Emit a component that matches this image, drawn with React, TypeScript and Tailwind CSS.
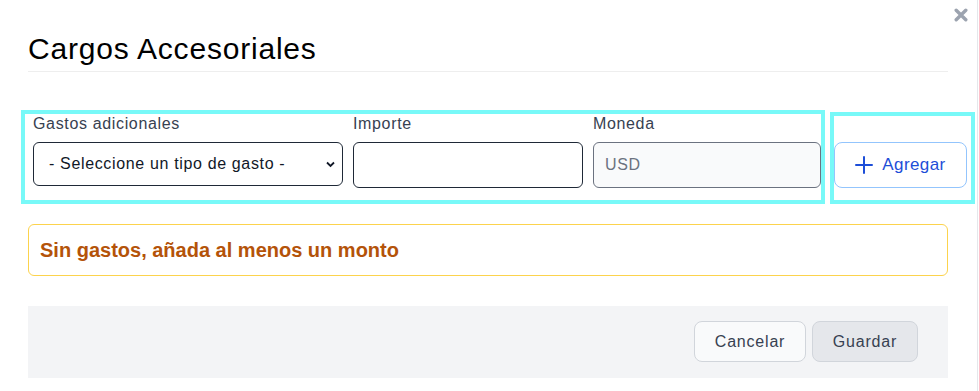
import React from "react";

export default function App() {
  const font = { fontFamily: '"Liberation Sans", Arial, sans-serif' };
  return (
    <div
      className="relative w-[978px] h-[391px] bg-white border-r border-[#e5e7eb] overflow-hidden"
      style={font}
    >
      {/* close */}
      <button className="absolute top-[7px] left-[953px] w-[15px] h-[15px] flex items-center justify-center">
        <svg width="14" height="14" viewBox="0 0 14 14">
          <path d="M2.2 2.2 L11.8 11.8 M11.8 2.2 L2.2 11.8" stroke="#9ca3af" strokeWidth="3.4" strokeLinecap="round" />
        </svg>
      </button>

      <div className="pl-[28px] pt-[32px] w-[948px]">
        <div className="pb-[5px] border-b border-[#eeeeee]">
          <h1 className="text-[30px] leading-[34px] text-black tracking-[0.8px]">Cargos Accesoriales</h1>
        </div>

        <div className="flex items-start -ml-[7px] mt-[38px] gap-[5px]">
          <div className="w-[804px] h-[94px] border-4 border-[#78f9f8] pl-[8px] pt-0 flex gap-[10px]">
            <div className="flex flex-col w-[310px]">
              <label className="text-[16px] leading-[20px] text-[#374151] tracking-[0.65px] mb-[8px]">Gastos adicionales</label>
              <div className="relative h-[44px] border border-[#1f2937] rounded-[6px] bg-white flex items-center pl-[15px]">
                <span className="text-[16px] text-[#111827] tracking-[0.65px]">- Seleccione un tipo de gasto -</span>
                <svg className="absolute right-[7px] top-[18px]" width="9" height="7" viewBox="0 0 9 7">
                  <path d="M1 1.5 L4.5 5 L8 1.5" stroke="#111827" strokeWidth="1.8" fill="none" />
                </svg>
              </div>
            </div>
            <div className="flex flex-col w-[230px]">
              <label className="text-[16px] leading-[20px] text-[#374151] tracking-[0.65px] mb-[8px]">Importe</label>
              <div className="h-[46px] border border-[#1f2937] rounded-[6px] bg-white" />
            </div>
            <div className="flex flex-col w-[228px]">
              <label className="text-[16px] leading-[20px] text-[#374151] tracking-[0.65px] mb-[8px]">Moneda</label>
              <div className="h-[46px] border border-[#6b7280] rounded-[6px] bg-[#f9fafb] flex items-center pl-[11px]">
                <span className="text-[16px] text-[#6b7280] tracking-[0.6px]">USD</span>
              </div>
            </div>
          </div>

          <div className="mt-[2px] w-[145px] h-[92px] border-4 border-[#78f9f8] pt-[26px] pr-[4px]">
            <button className="w-[133px] h-[46px] border border-[#93c5fd] rounded-[8px] bg-white flex items-center justify-center gap-[9px] text-[#1d4ed8]">
              <svg width="18" height="18" viewBox="0 0 18 18">
                <path d="M9 1 V17 M1 9 H17" stroke="#1d4ed8" strokeWidth="2" strokeLinecap="round" />
              </svg>
              <span className="text-[17px] tracking-[0.4px]">Agregar</span>
            </button>
          </div>
        </div>

        <div className="mt-[20px] h-[52px] border border-[#fcd34d] rounded-[6px] flex items-center pl-[11px]">
          <span className="text-[20px] font-bold text-[#b45309]">Sin gastos, añada al menos un monto</span>
        </div>

        <div className="mt-[30px] h-[72px] bg-[#f3f4f6] flex items-start justify-end pt-[15px] pr-[30px] gap-[6px]">
          <button className="w-[112px] h-[41px] border border-[#d1d5db] rounded-[8px] bg-[#f9fafb] text-[16px] text-[#374151] tracking-[0.8px]">
            Cancelar
          </button>
          <button className="w-[106px] h-[41px] border border-[#d1d5db] rounded-[8px] bg-[#e5e7eb] text-[16px] text-[#374151] tracking-[0.8px]">
            Guardar
          </button>
        </div>
      </div>
    </div>
  );
}
